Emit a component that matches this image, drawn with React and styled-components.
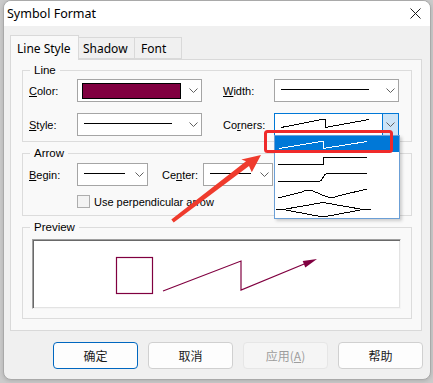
import styled, { createGlobalStyle } from "styled-components"

const GlobalStyle = createGlobalStyle`
  html, body {
    margin: 0;
    padding: 0;
  }
  body {
    background: #cbcbcb;
    font-family: "Liberation Sans", Arial, sans-serif;
    overflow: hidden;
  }
`

const Screen = styled.div`
  position: relative;
  width: 433px;
  height: 383px;
  box-sizing: border-box;
  padding-left: 3px;
`

const Window = styled.div`
  width: 428px;
  height: 380px;
  box-sizing: border-box;
  border: 1px solid #a9a9a9;
  border-radius: 8px;
  background: #f0f0f0;
  overflow: hidden;
  display: flex;
  flex-direction: column;
  box-shadow: 0 1px 4px rgba(0, 0, 0, 0.15);
`

const TitleBar = styled.div`
  flex: none;
  height: 25px;
  background: #fff;
  display: flex;
  align-items: center;
  justify-content: space-between;
  padding: 0 9px 0 3px;
  font-family: "Noto Sans", "Open Sans", sans-serif;
  font-size: 12.5px;
  color: #000;
  svg {
    display: block;
  }
`

const Body = styled.div`
  flex: 1;
  display: flex;
  flex-direction: column;
  padding: 9px 8px 0 6px;
`

const TabStrip = styled.div`
  display: flex;
  align-items: flex-end;
  height: 24px;
  position: relative;
  z-index: 1;
`

const Tab = styled.div`
  box-sizing: border-box;
  height: ${p => (p.$active ? 25 : 22)}px;
  margin-bottom: ${p => (p.$active ? -1 : 0)}px;
  width: ${p => p.$w}px;
  padding-left: ${p => p.$pl}px;
  display: flex;
  align-items: center;
  border: 1px solid #d9d9d9;
  border-bottom: ${p => (p.$active ? "none" : "1px solid #d9d9d9")};
  border-left: ${p => (p.$first ? "1px solid #d9d9d9" : "none")};
  background: ${p => (p.$active ? "#f9f9f9" : "#f0f0f0")};
  font-family: "Noto Sans", "Open Sans", sans-serif;
  font-size: 12px;
  color: #000;
`

const Panel = styled.div`
  height: 272px;
  box-sizing: border-box;
  border: 1px solid #d9d9d9;
  background: #f9f9f9;
  padding: 10px 9px 0 11px;
  display: flex;
  flex-direction: column;
  gap: 11px;
`

const Group = styled.section`
  position: relative;
  border: 1px solid #dcdcdc;
  padding: ${p => p.$pad};
  display: flex;
  flex-direction: column;
  gap: ${p => p.$gap || 0}px;
`

const Legend = styled.span`
  position: absolute;
  top: -8px;
  left: 7px;
  padding: 0 4px;
  background: #f9f9f9;
  font-size: 11.5px;
  line-height: 14px;
  color: #000;
`

const Row = styled.div`
  display: flex;
  align-items: center;
`

const Label = styled.span`
  flex: none;
  width: ${p => p.$w}px;
  margin-left: ${p => p.$ml || 0}px;
  font-size: 11px;
  color: #000;
  u {
    text-decoration: underline;
  }
`

const Combo = styled.div`
  position: relative;
  flex: none;
  width: ${p => p.$w}px;
  height: 23px;
  box-sizing: border-box;
  background: #fff;
  border: 1px solid ${p => (p.$focus ? "#0078d7" : "#a5a5a5")};
  display: flex;
  align-items: stretch;
`

const ComboValue = styled.div`
  flex: 1;
  min-width: 0;
  display: flex;
  align-items: center;
  padding-left: ${p => p.$pl}px;
  svg {
    display: block;
  }
`

const DropButton = styled.div`
  flex: none;
  width: 16px;
  display: flex;
  align-items: center;
  justify-content: center;
  background: ${p => (p.$focus ? "#cce4f7" : "transparent")};
  border-left: 1px solid ${p => (p.$focus ? "#0078d7" : "transparent")};
  box-sizing: border-box;
  svg {
    display: block;
  }
`

const Swatch = styled.div`
  width: 99px;
  height: 16px;
  box-sizing: border-box;
  border: 1px solid #000;
  background: ${p => p.$color};
`

const DropList = styled.div`
  position: absolute;
  top: 21px;
  left: -1px;
  width: 126px;
  box-sizing: border-box;
  border: 1px solid #6b9fd6;
  background: #fff;
  display: flex;
  flex-direction: column;
  z-index: 5;
  box-shadow: 2px 2px 3px rgba(0, 0, 0, 0.18);
`

const DropItem = styled.div`
  height: ${p => p.$h || 16}px;
  background: ${p => (p.$sel ? "#0078d7" : "#fff")};
  svg {
    display: block;
    overflow: visible;
  }
`

const CheckRow = styled.div`
  display: flex;
  align-items: center;
  gap: 4px;
  margin-left: 48px;
  font-size: 11px;
  color: #000;
`

const CheckBox = styled.div`
  width: 13px;
  height: 13px;
  box-sizing: border-box;
  border: 1px solid #adadad;
  background: #f3f3f3;
`

const PreviewCanvas = styled.div`
  height: 70px;
  box-sizing: border-box;
  background: #fff;
  border: 1px solid;
  border-color: #a0a0a0 #f4f4f4 #f4f4f4 #a0a0a0;
  box-shadow: inset 1px 1px 0 #696969, inset -1px -1px 0 #e3e3e3;
  svg {
    display: block;
  }
`

const ButtonBar = styled.div`
  display: flex;
  justify-content: flex-end;
  gap: 10px;
  margin-top: 11px;
  margin-right: -1px;
`

const Button = styled.div`
  width: 85px;
  height: 27px;
  box-sizing: border-box;
  border-radius: 4px;
  border: 1px solid ${p => (p.$default ? "#0067c0" : p.$disabled ? "#e6e6e6" : "#d0d0d0")};
  background: ${p => (p.$disabled ? "#f5f5f5" : "#fdfdfd")};
  color: ${p => (p.$disabled ? "#9d9d9d" : "#1b1b1b")};
  font-family: "Noto Sans CJK SC", "Noto Sans", sans-serif;
  font-size: 12px;
  display: flex;
  align-items: center;
  justify-content: center;
  u {
    text-decoration: underline;
  }
`

const Annotations = styled.svg`
  position: absolute;
  top: 0;
  left: 0;
  pointer-events: none;
  z-index: 10;
`

const PLUM = "#800040"

const Chevron = () => (
  <svg width="9" height="5" viewBox="0 0 9 5">
    <polyline points="0.5,0.5 4.5,4.5 8.5,0.5" fill="none" stroke="#606060" strokeWidth="1" />
  </svg>
)

const LineSample = ({ len = 88, path }) => (
  <svg width={len + 2} height="21" viewBox={`0 0 ${len + 2} 21`} shapeRendering="crispEdges">
    {path ? (
      <path d={path} fill="none" stroke="#000" strokeWidth="1" />
    ) : (
      <line x1="0" y1="9.5" x2={len} y2="9.5" stroke="#000" strokeWidth="1" />
    )}
  </svg>
)

const cornerItems = [
  { d: "M4 12.5 L46 5.5 L48 5.5 L48 12.5 L92 5.5", sel: true },
  { d: "M3 12.5 L48 12.5 L48 5.5 L92 5.5" },
  { d: "M3 13.5 L44 13.5 C48 13.5 48 5.5 52 5.5 L92 5.5" },
  { d: "M3 14 L27 8 Q33 4.5 39 7.5 L51 12.5 Q57 14.5 63 12 L92 5" },
  { d: "M1 9.5 L8 9.5 L48 2.5 L88 9.5 L96 9.5 M8 9.5 L48 17 L88 9.5", h: 18 }
]

export default function App() {
  return (
    <Screen>
      <GlobalStyle />
      <Window>
        <TitleBar>
          <span>Symbol Format</span>
          <svg width="11" height="11" viewBox="0 0 11 11">
            <path d="M0.5 0.5 L10.5 10.5 M10.5 0.5 L0.5 10.5" stroke="#1a1a1a" strokeWidth="1" />
          </svg>
        </TitleBar>
        <Body>
          <TabStrip>
            <Tab $active $first $w={69} $pl={6}>Line Style</Tab>
            <Tab $w={56} $pl={4}>Shadow</Tab>
            <Tab $w={47} $pl={6}>Font</Tab>
          </TabStrip>
          <Panel>
            <Group $pad="8px 10px 5px 6px" $gap={11}>
              <Legend>Line</Legend>
              <Row>
                <Label $w={48}><u>C</u>olor:</Label>
                <Combo $w={125}>
                  <ComboValue $pl={4}>
                    <Swatch $color={PLUM} />
                  </ComboValue>
                  <DropButton><Chevron /></DropButton>
                </Combo>
                <Label $w={51} $ml={21}><u>W</u>idth:</Label>
                <Combo $w={125}>
                  <ComboValue $pl={6}><LineSample /></ComboValue>
                  <DropButton><Chevron /></DropButton>
                </Combo>
              </Row>
              <Row>
                <Label $w={48}><u>S</u>tyle:</Label>
                <Combo $w={125}>
                  <ComboValue $pl={6}><LineSample /></ComboValue>
                  <DropButton><Chevron /></DropButton>
                </Combo>
                <Label $w={51} $ml={21}>Co<u>r</u>ners:</Label>
                <Combo $w={125} $focus>
                  <ComboValue $pl={6}>
                    <LineSample path="M0 13.5 L41 5.5 L44 5.5 L44 13.5 L88 5.5" />
                  </ComboValue>
                  <DropButton $focus><Chevron /></DropButton>
                  <DropList>
                    {cornerItems.map((item, idx) => (
                      <DropItem key={idx} $sel={item.sel} $h={item.h}>
                        <svg width="124" height={item.h || 16} shapeRendering="crispEdges">
                          <path d={item.d} fill="none" stroke={item.sel ? "#fff" : "#000"} strokeWidth="1" />
                        </svg>
                      </DropItem>
                    ))}
                  </DropList>
                </Combo>
              </Row>
            </Group>
            <Group $pad="9px 10px 7px 6px" $gap={9}>
              <Legend>Arrow</Legend>
              <Row>
                <Label $w={48}><u>B</u>egin:</Label>
                <Combo $w={71}>
                  <ComboValue $pl={6}><LineSample len={41} /></ComboValue>
                  <DropButton><Chevron /></DropButton>
                </Combo>
                <Label $w={41} $ml={14}>Ce<u>n</u>ter:</Label>
                <Combo $w={70}>
                  <ComboValue $pl={6}><LineSample len={41} /></ComboValue>
                  <DropButton><Chevron /></DropButton>
                </Combo>
              </Row>
              <CheckRow>
                <CheckBox />
                <span>Use perpendicular arrow</span>
              </CheckRow>
            </Group>
            <Group $pad="11px 10px 9px 9px">
              <Legend>Preview</Legend>
              <PreviewCanvas>
                <svg width="366" height="68" viewBox="0 0 366 68">
                  <rect x="83.5" y="17.5" width="36" height="36" fill="none" stroke={PLUM} strokeWidth="1.2" />
                  <polyline
                    points="130,51 208,21 208,50 276,22"
                    fill="none"
                    stroke={PLUM}
                    strokeWidth="1.2"
                  />
                  <polygon points="284,19 269.7,21.1 272.3,27.5" fill={PLUM} />
                </svg>
              </PreviewCanvas>
            </Group>
          </Panel>
          <ButtonBar>
            <Button $default>确定</Button>
            <Button>取消</Button>
            <Button $disabled>应用(<u>A</u>)</Button>
            <Button>帮助</Button>
          </ButtonBar>
        </Body>
      </Window>
      <Annotations width="433" height="383" viewBox="0 0 433 383">
        <rect x="265.5" y="131.5" width="126" height="20" rx="2" fill="none" stroke="#ef2a2a" strokeWidth="3" />
        <polygon
          points="171.3,219.4 246,161.2 241.4,159.4 261,155 251.8,172.2 249,166 173.7,222.6"
          fill="#ef3b2d"
        />
      </Annotations>
    </Screen>
  )
}
